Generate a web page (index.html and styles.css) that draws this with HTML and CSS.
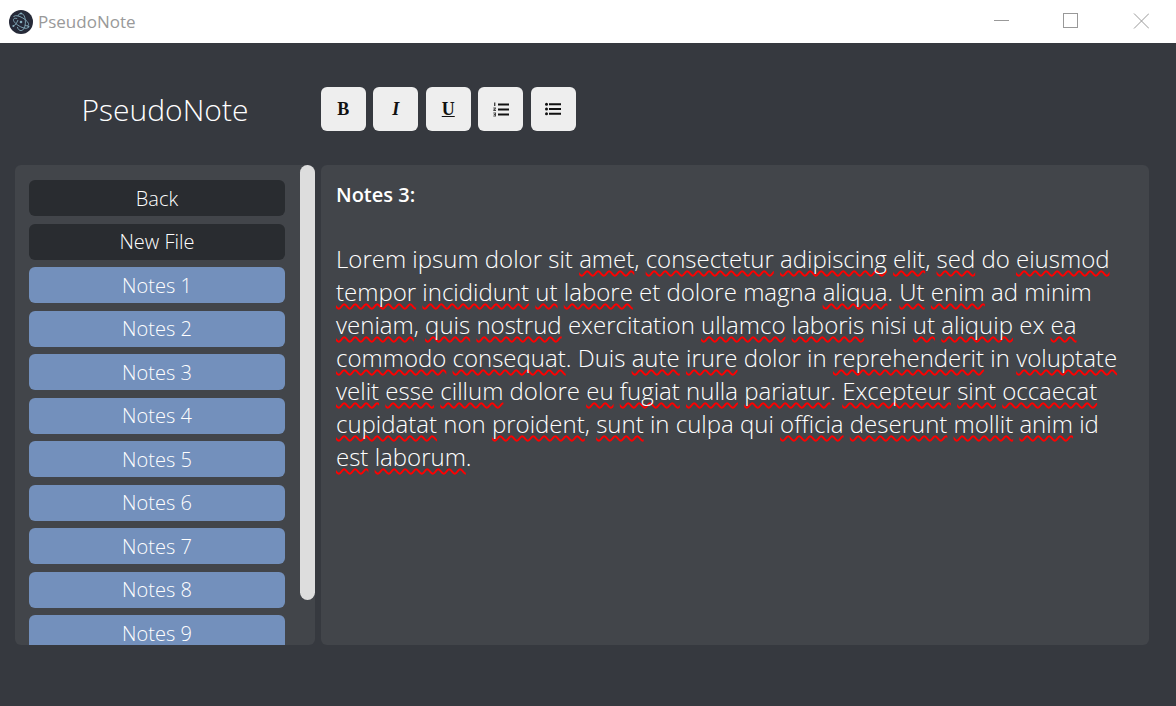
FILE: index.html
```html
<!DOCTYPE html>
<html lang="en">
<head>
    <meta charset="UTF-8">
    <title>PseudoNote</title>
    <link rel="stylesheet" href="styles.css">
</head>
<body>
    <div class="titlebar">
        <div class="app-name">
            <svg class="app-icon" viewBox="0 0 24 24" width="24" height="24">
                <circle cx="12" cy="12" r="12" fill="#262a38"/>
                <g fill="none" stroke="#86aebd" stroke-width="0.9">
                    <path d="M8.2 8.6C5 7.6 4 9 4.6 10.6C5.4 12.8 9 15.8 13 17.4C16.6 18.8 19 18.6 19.4 17"/>
                    <path d="M15.8 15.4C19 16.4 20 15 19.4 13.4C18.6 11.2 15 8.2 11 6.6C7.4 5.2 5 5.4 4.6 7"/>
                    <path d="M8.4 17C9 19.4 10.4 20.6 12 20.6C14.6 20.6 16.4 16.8 16.4 12C16.4 7.2 14.6 3.4 12 3.4C10.6 3.4 9.4 4.4 8.8 6.2"/>
                    <path d="M9 10C7.6 13.4 6 15.6 4.6 15.6"/>
                </g>
                <circle cx="12" cy="12" r="1.3" fill="#86aebd"/>
                <circle cx="4.4" cy="16" r="1" fill="#86aebd"/>
                <circle cx="19.4" cy="16.6" r="1" fill="#86aebd"/>
                <circle cx="12" cy="3.4" r="1" fill="#86aebd"/>
            </svg>
            <span>PseudoNote</span>
        </div>
        <div class="window-controls">
            <div class="win-btn">
                <svg viewBox="0 0 16 16" width="16" height="16"><path d="M1 7.5H16" stroke="#999" fill="none"/></svg>
            </div>
            <div class="win-btn">
                <svg viewBox="0 0 16 16" width="16" height="16"><rect x="0.5" y="0.5" width="14" height="14" stroke="#999" fill="none"/></svg>
            </div>
            <div class="win-btn">
                <svg viewBox="0 0 16 16" width="16" height="16"><path d="M1 0.5L16 15.5M16 0.5L1 15.5" stroke="#999" fill="none"/></svg>
            </div>
        </div>
    </div>

    <div class="app">
        <div class="header">
            <h1 class="logo">PseudoNote</h1>
            <div class="toolbar">
                <button class="tool"><b>B</b></button>
                <button class="tool"><i>I</i></button>
                <button class="tool"><u>U</u></button>
                <button class="tool">
                    <svg viewBox="0 0 16 15" width="16" height="15">
                        <path d="M5 1.5H16V3.5H5zM5 6.5H16V8.5H5zM5 11.5H16V13.5H5z" fill="#111"/>
                        <path d="M1 0.4H2.4V4H1zM0.3 5.4H3V6.6L1.6 7.8H3V8.9H0.3V7.8L1.8 6.5H0.3zM0.3 10.6H3V14.4H0.3V13.4H2V12.9H0.8V12.1H2V11.6H0.3z" fill="#444"/>
                    </svg>
                </button>
                <button class="tool">
                    <svg viewBox="0 0 16 14" width="16" height="14">
                        <path d="M4 1.2H16V3.2H4zM4 6H16V8H4zM4 10.8H16V12.8H4z" fill="#111"/>
                        <circle cx="1.5" cy="2.2" r="1.5" fill="#111"/>
                        <circle cx="1.5" cy="7" r="1.5" fill="#111"/>
                        <circle cx="1.5" cy="11.8" r="1.5" fill="#111"/>
                    </svg>
                </button>
            </div>
        </div>

        <div class="content">
            <div class="sidebar">
                <button class="file-btn dark">Back</button>
                <button class="file-btn dark">New File</button>
                <button class="file-btn">Notes 1</button>
                <button class="file-btn">Notes 2</button>
                <button class="file-btn">Notes 3</button>
                <button class="file-btn">Notes 4</button>
                <button class="file-btn">Notes 5</button>
                <button class="file-btn">Notes 6</button>
                <button class="file-btn">Notes 7</button>
                <button class="file-btn">Notes 8</button>
                <button class="file-btn">Notes 9</button>
                <div class="scroll-thumb"></div>
            </div>
            <div class="editor">
                <p class="note-title">Notes 3:</p>
                <p class="note-text">Lorem ipsum dolor sit <span class="typo">amet</span>, <span class="typo">consectetur</span> <span class="typo">adipiscing</span> <span class="typo">elit</span>, <span class="typo">sed</span> do <span class="typo">eiusmod</span> <span class="typo">tempor</span> <span class="typo">incididunt</span> <span class="typo">ut</span> <span class="typo">labore</span> et dolore magna <span class="typo">aliqua</span>. <span class="typo">Ut</span> <span class="typo">enim</span> ad minim <span class="typo">veniam</span>, <span class="typo">quis</span> <span class="typo">nostrud</span> exercitation <span class="typo">ullamco</span> <span class="typo">laboris</span> nisi <span class="typo">ut</span> <span class="typo">aliquip</span> ex <span class="typo">ea</span> <span class="typo">commodo</span> <span class="typo">consequat</span>. Duis <span class="typo">aute</span> <span class="typo">irure</span> dolor in <span class="typo">reprehenderit</span> in <span class="typo">voluptate</span> <span class="typo">velit</span> <span class="typo">esse</span> <span class="typo">cillum</span> dolore <span class="typo">eu</span> <span class="typo">fugiat</span> <span class="typo">nulla</span> <span class="typo">pariatur</span>. <span class="typo">Excepteur</span> <span class="typo">sint</span> <span class="typo">occaecat</span> <span class="typo">cupidatat</span> non <span class="typo">proident</span>, <span class="typo">sunt</span> in culpa qui <span class="typo">officia</span> <span class="typo">deserunt</span> <span class="typo">mollit</span> <span class="typo">anim</span> id <span class="typo">est</span> <span class="typo">laborum</span>.</p>
            </div>
        </div>
    </div>
</body>
</html>
```

FILE: styles.css
```css
* {
    margin: 0;
    padding: 0;
    box-sizing: border-box;
    font-family: 'Open Sans', sans-serif;
}

html, body {
    height: 100%;
    overflow: hidden;
}

body {
    display: flex;
    flex-direction: column;
    background: #36393f;
}

.titlebar {
    height: 43px;
    background: white;
    display: flex;
    justify-content: space-between;
    align-items: center;
}

.app-name {
    display: flex;
    align-items: center;
    gap: 5px;
    padding-left: 9px;
    color: #999;
    font-size: 17px;
}

.app-icon {
    display: block;
}

.window-controls {
    display: flex;
}

.win-btn {
    width: 70px;
    height: 43px;
    padding-top: 13px;
    display: flex;
    justify-content: center;
    align-items: flex-start;
}

.app {
    flex: 1;
    padding: 44px 27px 0 15px;
}

.header {
    display: flex;
    gap: 5.75px;
    align-items: center;
    margin-bottom: 34px;
}

.logo {
    width: 300px;
    text-align: center;
    color: white;
    font-size: 30px;
    font-weight: 300;
}

.toolbar {
    display: flex;
    gap: 7.5px;
}

.tool {
    width: 45px;
    height: 44px;
    background: #eee;
    border: none;
    border-radius: 6px;
    color: #111;
    font-size: 18px;
    display: flex;
    justify-content: center;
    align-items: center;
}

.tool b, .tool i, .tool u {
    font-family: 'Liberation Serif', serif;
    font-weight: bold;
}

.content {
    display: flex;
    gap: 6px;
    height: 480px;
}

.sidebar {
    position: relative;
    width: 300px;
    background: #42454a;
    border-radius: 6px;
    padding: 15px 0 0 14px;
    display: flex;
    flex-direction: column;
    gap: 7.5px;
    overflow: hidden;
}

.scroll-thumb {
    position: absolute;
    top: 0;
    right: 0;
    width: 15px;
    height: 435px;
    background: #ddd;
    border-radius: 8px;
}

.file-btn {
    flex: none;
    width: 256px;
    height: 36px;
    background: #7390bc;
    border: none;
    border-radius: 6px;
    color: white;
    font-size: 20px;
    font-weight: 300;
}

.file-btn.dark {
    background: #292c30;
}

.editor {
    flex: 1;
    background: #42454a;
    border-radius: 6px;
    padding: 15px;
    color: white;
}

.note-title {
    font-size: 20px;
    font-weight: 600;
    line-height: 30px;
    height: 62px;
}

.note-text {
    font-size: 24px;
    font-weight: 300;
    line-height: 33px;
}

.typo {
    text-decoration: underline wavy #f00;
    text-decoration-thickness: 1.5px;
    text-underline-offset: 2px;
    text-decoration-skip-ink: none;
}
```
